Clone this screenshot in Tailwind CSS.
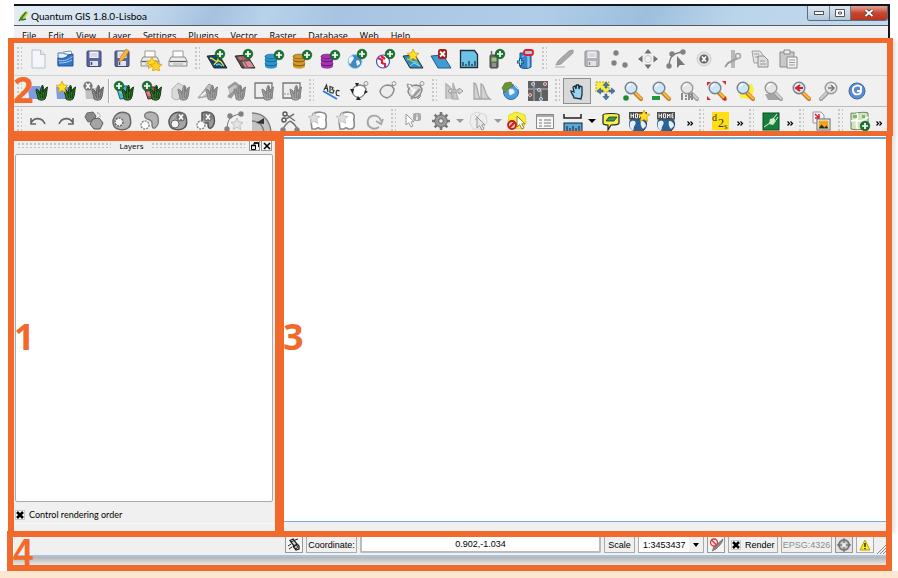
<!DOCTYPE html>
<html lang="en">
<head>
<meta charset="utf-8">
<title>Quantum GIS 1.8.0-Lisboa</title>
<script src="https://cdn.jsdelivr.net/npm/@tailwindcss/browser@4"></script>
</head>
<body class="bg-white">
<div class="flex min-h-screen flex-col overflow-hidden font-['Open_Sans','Noto_Sans',sans-serif] text-black">
  <main class="flex flex-1 flex-col pt-1 pr-[5px] pl-2">

    <header class="mr-[3px] ml-[6px] flex flex-col border-t-2 border-r-2 border-[#14141c]">
      <div class="flex h-5 items-center border-b border-[#4f5b66] bg-[linear-gradient(115deg,#e3ecf5_0%,#d0e0ef_12%,#b5cee7_19%,#a5c1de_23%,#b7d2ea_29%,#a7c5e2_37%,#b0cde8_60%,#9dbfdd_72%,#bad4ea_82%,#c3daee_100%)] pl-[3px]">
        <svg class="h-3 w-3" viewBox="0 0 12 12" aria-hidden="true"><path d="M2 11 4 5l6-4 1 2-4 6-3 1z" fill="#b6cf2f"/><path d="M2 11 9 2M4 7l1 3 4-1" stroke="#35701f" stroke-width="1.400" fill="none"/></svg>
        <h1 class="ml-[2px] flex-1 font-[Lato,sans-serif] text-[10px] leading-4">Quantum GIS 1.8.0-Lisboa</h1>
        <div class="mb-[5px] flex h-[15px] overflow-hidden rounded-b-[3px] border border-t-0 border-[#5d6b7a]">
          <button type="button" aria-label="Minimize" class="flex w-[22px] items-center justify-center border-r border-[#6d7b8a] bg-linear-to-b from-[#dbe7f2] to-[#b3c8dc]"><svg class="h-[5px] w-[10px]" viewBox="0 0 10 5"><rect x=".5" y="1.500" width="9" height="3" fill="#fff" stroke="#555"/></svg></button>
          <button type="button" aria-label="Maximize" class="flex w-[21px] items-center justify-center border-r border-[#6d7b8a] bg-linear-to-b from-[#dbe7f2] to-[#b3c8dc]"><svg class="h-2 w-[10px]" viewBox="0 0 10 8"><path d="M.5.500h9v7h-9zM3.500 3h3v2h-3z" fill="#fff" stroke="#555"/></svg></button>
          <button type="button" aria-label="Close" class="flex w-9 items-center justify-center bg-linear-to-b from-[#e0a396] via-[#c8452f] to-[#b8351f]"><svg class="h-2 w-[10px]" viewBox="0 0 10 8"><path d="m1.500 1 7 6m0-6-7 6" stroke="#4c3434" stroke-width="3.400"/><path d="m1.500 1 7 6m0-6-7 6" stroke="#fff" stroke-width="2"/></svg></button>
        </div>
      </div>
      <nav class="flex h-3 gap-3 bg-[#f0f0f0] pl-2 text-[9px] leading-5">
        <a href="#">File</a><a href="#">Edit</a><a href="#">View</a><a href="#">Layer</a><a href="#">Settings</a><a href="#">Plugins</a><a href="#">Vector</a><a href="#">Raster</a><a href="#">Database</a><a href="#">Web</a><a href="#">Help</a>
      </nav>
    </header>

    <section aria-label="Toolbars" class="relative border-x-[6px] border-y-[5px] border-[#f26a2b] bg-[#f0f0f0] shadow-[3px_2px_4px_rgba(0,0,0,0.12)]">
      <div id="row1" class="flex h-[33px] items-center border-b border-[#d2d2d2]"></div>
      <div id="row2" class="flex h-[31px] items-center border-b border-[#bdbdbd]"></div>
      <div id="row3" class="flex h-6 items-start overflow-hidden"></div>
      <span class="absolute top-[27px] -left-px text-4xl leading-10 font-bold text-[#f26a2b]">2</span>
    </section>

    <div class="relative mr-px flex flex-1 shadow-[3px_2px_4px_rgba(0,0,0,0.12)]">
      <aside aria-label="Layers" class="relative flex w-[276px] flex-col border-t-[5px] border-r-[9px] border-l-[6px] border-[#f26a2b] bg-[#f0f0f0]">
        <div class="flex h-[13px] items-start gap-1 pr-[3px] pl-1">
          <span class="mt-[2px] h-[5px] flex-1 bg-[radial-gradient(circle_at_1px_1px,#c4c4c4_1px,transparent_1px)] bg-[size:4px_4px]"></span>
          <h2 class="px-1 text-[8px] leading-[9px]">Layers</h2>
          <span class="mt-[2px] h-[5px] flex-1 bg-[radial-gradient(circle_at_1px_1px,#c4c4c4_1px,transparent_1px)] bg-[size:4px_4px]"></span>
          <div class="flex gap-px">
            <button type="button" aria-label="Float panel" class="flex h-[10px] w-[11px] items-center justify-center border border-t-0 border-[#999] bg-[#f6f6f6]"><svg class="h-2 w-2" viewBox="0 0 8 8"><path d="M3 1h4.500v4M3 1v2M.500 3.500h4v4h-4z" fill="none" stroke="#000"/><path d="M3 1h5M0 3.500h5" stroke="#000" stroke-width="1.500"/></svg></button>
            <button type="button" aria-label="Close panel" class="flex h-[10px] w-[11px] items-center justify-center border border-t-0 border-[#999] bg-[#f6f6f6]"><svg class="h-2 w-2" viewBox="0 0 8 8"><path d="m1 1 6 6m0-6L1 7" stroke="#000" stroke-width="1.600"/></svg></button>
          </div>
        </div>
        <div class="mr-[2px] ml-px flex-1 rounded-[2px] border border-[#aaa] bg-white"></div>
        <label class="flex h-5 items-center gap-1 pt-[5px] pl-px font-[Lato,sans-serif] text-[9px] leading-4">
          <span class="relative flex h-[10px] w-[10px]"><input type="checkbox" checked class="h-[10px] w-[10px] appearance-none border border-[#ccc] bg-white"><svg class="pointer-events-none absolute inset-0" viewBox="0 0 10 10"><path d="m2 2 6 6m0-6L2 8" stroke="#000" stroke-width="2.600"/></svg></span>
          Control rendering order
        </label>
        <div class="mt-px h-2 border-t border-[#fafafa]"></div>
        <span class="absolute top-[176px] left-0 text-4xl leading-10 font-bold text-[#f26a2b]">1</span>
      </aside>
      <section aria-label="Map canvas" class="relative flex flex-1 flex-col border-r-[6px] border-[#f26a2b] bg-white pt-px">
        <div class="flex-1 border-t-2 border-b border-t-[#6ea5d8] border-b-[#7aaad8]"></div>
        <div class="h-[9px] bg-[#f0f0f0]"></div>
        <span class="absolute top-[181px] -left-px text-4xl leading-10 font-bold text-[#f26a2b]">3</span>
      </section>
    </div>

    <footer class="relative mr-px -ml-px border-[6px] border-[#f26a2b] bg-white font-['Liberation_Sans',Arial,sans-serif] text-[9px] leading-4">
      <div class="ml-px flex h-5 items-start justify-end gap-[3px] border-b-2 border-[#a9c3dc] bg-[#f0f0f0] pl-[271px]">
        <button type="button" aria-label="Toggle extents and mouse position" class="flex h-4 w-[18px] items-center justify-center border border-t-0 border-[#999] bg-[#f4f4f4]"><svg class="h-[14px] w-[14px]" viewBox="0 0 14 14"><path d="M3 2.500 6 1l4 5-3 2zM6 8l3 4 3-1V8l-2-2" fill="#ddd" stroke="#222" stroke-width="1.300"/><path d="m1 8 3-2m-2 5 3-2m3-7 3-1M4 4l4-2" stroke="#222"/><circle cx="9" cy="9" r="1.500" fill="#fff" stroke="#222"/></svg></button>
        <label for="coord" class="h-4 w-[51px] border border-t-0 border-[#aaa] text-center">Coordinate:</label>
        <input id="coord" value="0.902,-1.034" class="h-4 min-w-0 flex-1 rounded-b-[2px] border-x-2 border-b-2 border-[#bbb] bg-white text-center outline-none">
        <label for="scale" class="h-4 w-[31px] border border-t-0 border-[#aaa] text-center">Scale</label>
        <span class="relative flex h-4 w-[66px] border border-t-0 border-[#aaa] bg-white"><select id="scale" class="w-full appearance-none bg-transparent pl-1"><option>1:3453437</option></select><svg class="pointer-events-none absolute top-0 right-0 h-[15px] w-[14px] bg-[#f0f0f0]" viewBox="0 0 14 15"><path d="M4 6h6l-3 4z"/></svg></span>
        <button type="button" aria-label="Stop map rendering" class="flex h-4 w-[18px] items-center justify-center border border-t-0 border-[#999] bg-[#f4f4f4]"><svg class="h-[14px] w-4" viewBox="0 0 16 14"><path d="M15 1c-1 5-4 7-7 10l-4 2c2-2 0-3 3-5z" fill="#888" stroke="#555" stroke-width=".6"/><circle cx="6" cy="4.500" r="3.500" fill="#fbe3e3" stroke="#d33b3b" stroke-width="1.300"/><path d="m3.500 2 5 5" stroke="#d33b3b" stroke-width="1.300"/></svg></button>
        <label class="flex h-4 w-[50px] items-center gap-1 border border-t-0 border-[#aaa] pl-[2px]"><span class="relative flex h-[10px] w-[10px]"><input type="checkbox" checked class="h-[10px] w-[10px] appearance-none border border-[#ccc] bg-white"><svg class="pointer-events-none absolute inset-0" viewBox="0 0 10 10"><path d="m2 2 6 6m0-6L2 8" stroke="#000" stroke-width="2.600"/></svg></span>Render</label>
        <span class="h-4 w-[51px] border border-t-0 border-[#aaa] text-center text-[#8c8c8c]">EPSG:4326</span>
        <button type="button" aria-label="Projection status" class="flex h-4 w-[18px] items-center justify-center border border-t-0 border-[#999] bg-[#e4e4e4]"><svg class="h-[14px] w-[14px]" viewBox="0 0 14 14"><circle cx="7" cy="7" r="5" fill="#ccc" stroke="#777" stroke-width="2"/><path d="M7 0v14M0 7h14" stroke="#777" stroke-width="1.300"/><circle cx="7" cy="7" r="2" fill="#eee"/></svg></button>
        <button type="button" aria-label="Messages" class="flex h-4 w-[18px] items-center justify-center border border-t-0 border-[#aaa] bg-[#f4f4f4]"><svg class="h-3 w-3" viewBox="0 0 12 12"><path d="m6 1 5 10H1z" fill="#ffeb1a" stroke="#b5a400"/><path d="M6 4v4m0 1v1.300" stroke="#111" stroke-width="1.300"/></svg></button>
        <svg class="mt-2 h-[9px] w-[9px]" viewBox="0 0 9 9"><path d="m0 9 9-9M3 9l6-6M6 9l3-3" stroke="#888"/></svg>
      </div>
      <div class="h-2 bg-linear-to-b from-[#b3b3b3] to-[#e9e9e9]"></div>
      <span class="absolute -top-1 left-0 text-4xl leading-10 font-bold text-[#f26a2b]">4</span>
    </footer>
  </main>
  <div class="h-[7px] bg-[#fde7d0]"></div>
</div>

<script>
const plus = (x, y) => `<circle cx="${x}" cy="${y}" r="4.800" fill="#1c7431" stroke="#0e5220" stroke-width=".6"/><path d="M${x - 3} ${y}h6M${x} ${y - 3}v6" stroke="#fff" stroke-width="1.700"/>`;
const cross = (x, y, c) => `<circle cx="${x}" cy="${y}" r="4.600" fill="${c}"/><path d="m${x - 2} ${y - 2.5} 4 5m0-5-4 5" stroke="#fff" stroke-width="1.600"/>`;
const star = (x, y, f = '#ffe21f', s = '#d99a12') => `<path transform="translate(${x} ${y})" d="m0-6 1.700 3.900 4.300.5-3.200 2.800.9 4.300L0 3.300-3.700 5.500l.9-4.300L-6-1.600l4.300-.5z" fill="${f}" stroke="${s}" stroke-width=".8"/>`;
const grass = (f = '#2f7a2c', s = '#16350f') => `<path d="M12 20c0-4-2-6-2-10 3 1 4 3 4.500 5 0-4 0-7 2-9 1.500 2 1 5 1 7 1-3 2-4 4-5-1 4-.5 8-2.500 12-2 1.500-5 1.500-7 0z" fill="${f}" stroke="${s}" stroke-width="1"/><path d="M11.500 12c2 2 2.500 4 3 7m2-11c0 4-.5 7 0 11m4-9c-2 3-2 6-2.500 9" stroke="${s}" fill="none" stroke-width="1"/>`;
const gg = grass('#a3a3a3', '#7d7d7d');
const layer = (f) => `<path d="m2 9 12-1 8 13H9z" fill="${f}" stroke="#222" stroke-width=".9"/>`;
const db = (a, b) => `<path d="M4 9v10c0 3.500 12 3.500 12 0V9z" fill="${a}"/><path d="M4 12.500c0 3 12 3 12 0M4 16.500c0 3 12 3 12 0" stroke="${b}" fill="none"/><ellipse cx="10" cy="9.500" rx="6" ry="2.300" fill="${a}" stroke="${b}" stroke-width=".7"/>` + plus(18, 8);
const floppy = (a, b) => `<rect x="5" y="4" width="14" height="15.500" rx="1" fill="${a}" stroke="${b}"/><path d="M7.500 4.500h9V11h-9z" fill="#f2f4fa"/><path d="M8.500 7h7m-7 2h7" stroke="#b8bccb"/><path d="M8 14h8v5H8z" fill="#dfe3ee"/><path d="M9.500 15v3" stroke="${b}" stroke-width="1.500"/>`;
const printer = `<path d="M7 11V4h10v7" fill="#fff" stroke="#999"/><path d="M5 10h14l2 4v5H3v-5z" fill="#ececec" stroke="#8a8a8a"/><path d="M3.500 14.500h17" stroke="#555" stroke-width="1.200"/><path d="M7 17h10" stroke="#aaa"/>`;
const mag = (g, h) => `<path d="m14 14 6 6" stroke="${h[1]}" stroke-width="4" stroke-linecap="round"/><path d="m14.500 14 5.500 5.500" stroke="${h[0]}" stroke-width="2.400" stroke-linecap="round"/><circle cx="10" cy="9" r="5.800" fill="${g[0]}" stroke="${g[1]}" stroke-width="1.400"/><path d="M6.500 8c.5-2 2-2.800 3.500-2.800" stroke="#fff" stroke-width="1.400" fill="none"/>`;
const magC = mag(['#cfe6f6', '#76828c'], ['#f5b83c', '#c4761c']);
const magG = mag(['#e6e6e6', '#999'], ['#ccc', '#999']);
const blob = 'M7 5c4-3 12-2 13 3 1 4 1 9-2 11-4 3-12 2-14-2C2 13 3 8 7 5z';
const dots = (a) => a.map(p => `<circle cx="${p[0]}" cy="${p[1]}" r="2.700" fill="#828282"/>`).join('');
const tag = (f) => `<path d="M5 12c1-3 4-6 8-6l4 1 2 3c0 4-3 8-7 9-4-1-7-4-7-7z" fill="${f}" stroke="#8a8a8a" stroke-width="1.500"/><path d="m17 7 2-3" stroke="#8a8a8a" stroke-width="1.600"/><circle cx="19" cy="4.500" r="2" fill="#eee" stroke="#999"/>`;
const globe = `<circle cx="11" cy="15" r="8.500" fill="#2a6296" stroke="#173a60"/><path d="M3 13c4-3 7 0 5 3s-1 5-2 6c-3-2-4-6-3-9zm11-1c3 0 5 2 5 5l-3 3c-2-2-3-5-2-8z" fill="#e4eef5"/>`;
const home = `<rect x="2" y="3" width="18" height="7.500" fill="#4a4a4a"/><path d="M4 4.500v4.500m2.500-4.500v4.500M4 6.700h2.500M8.500 4.800h2v4h-2zM12.500 9V5l1.200 2L15 5v4m3.500-4.200H17v4h1.800M17 6.900h1.500" stroke="#fff" stroke-width=".9" fill="none"/>`;
const arrows = (c) => `<path d="m12 2 3.500 4.500h-7zm0 20 3.500-4.500h-7zM2 12l4.500-3.500v7zm20 0-4.500-3.500v7z" fill="${c}"/>`;
const cursor = (x, y, f, s) => `<path transform="translate(${x} ${y})" d="M0 0v11l2.600-2.300L5 13l2-1-2.200-4.200H8z" fill="${f}" stroke="${s}"/>`;

const icons = {
  new: `<path d="M6 3h8.500L19 7.500V21H6z" fill="#f4f6fb" stroke="#b9c0cf"/><path d="M14.500 3v4.500H19" fill="#dde3ef" stroke="#b9c0cf"/>`,
  open: `<path d="M4 8V6h5l2 1h7v11H4z" fill="#e9f1fb" stroke="#4d78b0"/><path d="m9 5 8-1 1 4" fill="#fff" stroke="#7896c0"/><path d="M4 11c5 1 8 0 10-3l5-1v12H4z" fill="#3575c8" stroke="#23559c"/><path d="M4.500 13.500c6 1 10-1 14-4M5 16c5 0 10-1 13-3" stroke="#a9cdf5" fill="none"/>`,
  save: floppy('#59659c', '#3c4674'),
  saveas: floppy('#59659c', '#3c4674') + `<path d="m9 15 1-4 6-9 3 2-6 9z" fill="#f7b733" stroke="#c97e14" stroke-width=".7"/>`,
  printstar: printer + star(14, 16) + star(18, 19, '#ffd21f'),
  print: printer,
  vector: layer('#17456b') + `<path d="M5 11c4 0 4 4 8 3s4 4 6 5M9 18c1-3 5-2 4-8" stroke="#e3e83a" stroke-width="1.300" fill="none"/><path d="m11 18 3-1 3 2" stroke="#52c5ee" stroke-width="1.500" fill="none"/>` + plus(15, 7),
  raster: layer('#5b4c4c') + `<path d="m4 10 10-1 2 3-9 1z" fill="#c96a70"/><path d="m9 15 8-1 4 6-9 .5z" fill="#db8f92"/><path d="m8 9 7 12" stroke="#8f5a76" stroke-width="1.300"/>` + plus(15, 7),
  pg: db('#2e95cd', '#17628f'), sl: db('#d39a2b', '#7b5410'), ms: db('#a437b0', '#64136f'),
  wms: `<circle cx="10" cy="14.500" r="7" fill="#3d8ac4" stroke="#a8cbe4"/><path d="M5 10c3-2 5 1 3 3s-2 4-3 4c-2-2-2-5 0-7zm6 4c3-2 4 1 4 3l-3 2z" fill="#eef6fb"/>` + plus(17, 7),
  wfs: `<circle cx="10" cy="14.500" r="6.500" fill="#fff" stroke="#3a53c8" stroke-width="1.200"/><path d="m5 11 4 2 0 3 3 1 0 3M8 9l4 3" stroke="#e0203a" stroke-width="2.200" fill="none"/>` + plus(17, 7),
  newshp: layer('#2f8fc4') + `<path d="M6 12c4 0 4 3 8 3s2 3 4 4" stroke="#d6f04a" fill="none"/><path d="m9 19 4-3 6 3" stroke="#8fe0f5" fill="none"/>` + star(12, 8),
  remove: `<path d="m2 9 12-1 8 13H9z" fill="#3f9bd0" stroke="#1f5f8f"/><rect x="9" y="2" width="9" height="10" rx="2.500" fill="#a81b1b"/><path d="m11 4.500 5 5m0-5-5 5" stroke="#fff" stroke-width="1.800"/>`,
  measurebook: `<path d="M3.500 3.500h14l3 4v13h-17z" fill="#6cc3e6" stroke="#1d2e3a" stroke-width="1.300"/><path d="M6 19v-4m3 4v-2m3 2v-5m3 5v-2m3 2v-5" stroke="#12384c" stroke-width="1.300"/>`,
  gps: `<rect x="5" y="8" width="8" height="13" rx="1" fill="#5b6b5b" stroke="#444"/><rect x="6.500" y="10.500" width="5" height="4" fill="#9ec27a"/><path d="M7 17h4m-4 2h4" stroke="#bbb"/><path d="M6.500 9V4" stroke="#666" stroke-width="1.500"/>` + plus(15, 7),
  oracle: `<path d="M7 6h11v14c-3 2-8 2-11 0z" fill="#3385d0" stroke="#1b4e89"/><path d="M9 10c2-2 5-2 6 0v11M16 9v11" stroke="#a6d2f5" fill="none"/><rect x="11" y="3" width="9" height="5" rx="2" fill="#a9c6ea" stroke="#e51c23" stroke-width="1.800"/><path d="M4 15h7m-3.500-4v8" stroke="#1b5a7a" stroke-width="3"/><path d="M5 15h5m-2.500-3v6" stroke="#9adcf2"/>`,
  edit: `<path d="m4 18 2-4L17 4l4-1v3L9 17z" fill="#a9a9a9" stroke="#9a9a9a"/><path d="M3 20h10" stroke="#c4c4c4" stroke-width="1.500"/>`,
  saveg: floppy('#b3b3b3', '#909090'),
  points: dots([[8, 6], [6, 16], [17, 18]]),
  move: arrows('#6e6e6e') + `<circle cx="12" cy="12" r="3.500" fill="none" stroke="#ccc"/>`,
  node: `<path d="M5 18C6 10 8 6 19 5" stroke="#777" fill="none" stroke-width="1.300"/>` + dots([[5, 19], [8, 7], [19, 5]]) + `<path d="M13 9v12l3-3h5z" fill="#777"/>`,
  del: `<circle cx="12" cy="12" r="7" fill="#e4e4e4" stroke="#ccc"/>` + cross(12, 12, '#666'),
  cut: `<path d="M12 3v18M14 3v18" stroke="#a6a6a6" stroke-width="1.500"/><path d="m5 20 3-4 10-5" stroke="#9b9b9b" stroke-width="2" fill="none"/><circle cx="18" cy="9" r="2.500" fill="#eee" stroke="#a6a6a6" stroke-width="1.500"/>`,
  copy: `<path d="M4 4h8l3 4v8H6z" fill="#e5e5e5" stroke="#a0a0a0"/><path d="M10 9h6l4 4v7H10z" fill="#ddd" stroke="#8c8c8c"/><path d="M6 7h5M7 10h4m1 4h5m-5 3h6" stroke="#999"/>`,
  paste: `<path d="M4 5h14v15H4z" fill="#c9c9c9" stroke="#8a8a8a"/><path d="M8 3h6v4H8z" fill="#eee" stroke="#8a8a8a"/><path d="M11 10h10v11H11z" fill="#f4f4f4" stroke="#8a8a8a"/><path d="M13 13h6m-6 2.500h6M13 18h6" stroke="#999"/>`,
  g1: `<path d="M2 7h12l3 13H3z" fill="#7c9fdb"/>` + grass(),
  g2: `<path d="M2 8h13l2 12H3z" fill="#7c9fdb"/>` + grass() + star(8, 8),
  g3: `<path d="M3 9h12l2 11H4z" fill="#c0c0c0"/>` + grass('#8d8d8d', '#5e5e5e') + cross(6, 7, '#777'),
  g4: `<path d="M4 7h11l3 12-10 1z" fill="#43b4d8" stroke="#245d7a"/><path d="m7 12 6 5" stroke="#e8e34a"/>` + grass() + plus(7, 7),
  g5: `<path d="M4 8h11l3 11-10 1z" fill="#a0555d" stroke="#4d2a2a"/><path d="m6 13 7-1 1 4-6 1z" fill="#d9808a"/>` + grass() + plus(7, 7),
  g6: `<path d="M4 10 10 4l8 4v10l-10 3-4-2z" fill="#dadada" stroke="#b5b5b5"/>` + gg,
  g7: `<path d="M2 19 13 5l4 2-3 10z" fill="#bdbdbd" stroke="#9c9c9c"/><path d="m5 17 7-5" stroke="#f4f4f4" stroke-width="2"/>` + gg,
  g8: `<path d="m4 9 7-5 4 3-9 12m-2-1L15 9" fill="#c5c5c5" stroke="#999" stroke-width="2.500"/>` + gg,
  g9: `<path d="M3 4h17v15H3z" fill="#ededed" stroke="#777" stroke-width="1.300"/>` + gg,
  g10: `<path d="M3 4h17v15H3z" fill="#ededed" stroke="#777" stroke-width="1.300"/><path d="M4 15h9" stroke="#888" stroke-dasharray="2 1"/>` + gg,
  abc: `<path d="m4 12 14 8" stroke="#2f7fd8" stroke-width="2"/><path d="m5 11 2.500-5 1.500 7M6 9.500h3m2 4V7.500l3 1-1 2 2 1-1 2.500zm9.500-1.500c-3-2-4 1-3 4l3 1" fill="none" stroke="#333" stroke-width="1.200"/>`,
  t1: tag('#fff') + `<path d="M8 4h4l-2 4zM3 10h4l-1 5zm6 11 2-4 3 4zm8-6 1-4 3 2z" fill="#222"/>`,
  t2: tag('#ececec'),
  t3: `<path d="m4 5 5 1 9 11-3 3L5 9z" fill="#bbb" stroke="#999"/>` + tag('#ddd') + `<path d="m8 20 9-10" stroke="#999" stroke-width="2.500"/><path d="m6 6 4 5m2-1-3 5" stroke="#fff" stroke-width="1.500"/>`,
  h1: `<path d="M4 20V5l4 3 2 12m1 0V4l5 16z" fill="#ccc" stroke="#b3b3b3" stroke-width="1.500"/><path d="m6 12 3-3v2h8V9l4 3-4 3v-2H9v2z" fill="#ddd" stroke="#999"/>`,
  h2: `<path d="M4 20V4c4 0 3 11 6 16zm7 0V5c4 0 3 11 9 15z" fill="#d2d2d2" stroke="#a8a8a8" stroke-width="1.300"/>`,
  globe2: `<circle cx="13" cy="13" r="7.500" fill="#4c9edb" stroke="#2a6ea8"/><path d="m4 9 3-5 6-1 2 4-4 2-4 5z" fill="#5e9638" stroke="#8a6a2a" stroke-width=".8"/><path d="M11 11c3-2 6 0 5 3l-4 2zm5-5 4 4" fill="#f0f8ff" stroke="#d8edfa"/>`,
  rasterx: `<rect x="2" y="2" width="20" height="20" fill="#606060"/><path d="M8 2v20M2 10h20M15 10v12" stroke="#8b8b8b" stroke-width="2"/><g fill="#fff"><circle cx="7" cy="5" r="1.800"/><circle cx="19" cy="5" r="1.800"/><circle cx="4" cy="16" r="1.800"/><circle cx="13" cy="11" r="1.800"/><circle cx="15" cy="20" r="1.800"/></g><g fill="#d62828"><circle cx="19" cy="5" r="1"/><circle cx="4" cy="16" r="1"/></g><g fill="#2b6fc4"><circle cx="7" cy="5" r="1"/><circle cx="13" cy="11" r="1"/><circle cx="15" cy="20" r="1"/></g>`,
  pan: `<path d="M9 19c0-3-3-4-3-7l3 1-1-5 2-1 1 3 .5-4h2l.5 4 1-3 2 1v7c0 3-1 3-1 5z" fill="#9fd4f0" stroke="#16303f" stroke-width="1.300"/>`,
  pansel: `<path d="M3 3h13v10H3z" fill="#f8ec4a" stroke="#b8a818" stroke-dasharray="2 1"/><path d="m13 3 3 3.500h-2V9h-2V6.500h-2zm0 18 3-3.500h-2V15h-2v2.500h-2zM4 12l3.500-3v2H10v2H7.500v2zm18 0-3.500-3v2H16v2h2.500v2z" fill="#4d7ba3" stroke="#2f5878" stroke-width=".6"/>`,
  zin: magC + `<circle cx="5" cy="19" r="2.800" fill="#1d8a35"/>`,
  zout: magC + `<path d="M3 17h8v4H3z" fill="#1d9a3f"/>`,
  zone: magG + `<path d="M5 14v7m4-5v2m0 1v2m3-7v7m0-3h3m0-4v7" stroke="#8b8b8b" stroke-width="2"/>`,
  zfull: magC + `<path d="m2 3 4 0-4 4zm19-1v4l-4-4zM2 21v-4l4 4zm19 0h-4l4-4z" fill="#e0242c"/>`,
  zsel: `<path d="M6 5h13l2 6-3 9-11-1z" fill="#fbee3c"/>` + magC,
  zlayer: `<path d="M4 15h13l5 6H7z" fill="#a5a5a5"/>` + magG,
  zlast: magC + `<path d="M14 9H9m2-3L7 9l4 3" stroke="#d8161f" stroke-width="2" fill="none"/>`,
  znext: `<g transform="translate(24 0) scale(-1 1)">` + magG + `</g><path d="M11 9h5m-2-3 3 3-3 3" stroke="#777" stroke-width="1.500" fill="none"/>`,
  refresh: `<circle cx="12" cy="12" r="8" fill="#5d8bd3" stroke="#3d68b0"/><path d="M16 8c-3-3-9-1-8 4 1 5 8 4 8 0h-4m4-5v4" stroke="#fff" stroke-width="1.900" fill="none"/>`,
  undo: `<path d="M5 14c3-6 11-6 14 1M5 9v6h5" fill="none" stroke="#666" stroke-width="1.600"/>`,
  redo: `<path d="M19 14c-3-6-11-6-14 1M19 9v6h-5" fill="none" stroke="#666" stroke-width="1.600"/>`,
  simp: `<path d="m5 4 6-1 3 4-2 5-6 1-3-5z" fill="#8a8a8a" stroke="#666"/><path d="m11 10 6-1 4 5-3 6h-6l-4-5z" fill="#a5a5a5" stroke="#555"/><path d="M15 4c3 0 3 1 3 4" stroke="#888" fill="none" stroke-dasharray="1.500 1"/>`,
  ring: `<path d="${blob}" fill="#b3b3b3" stroke="#666" stroke-width="1.500"/><circle cx="9" cy="13" r="4" fill="#f4f4f4" stroke="#666" stroke-width="1.500" stroke-dasharray="2 1"/>`,
  part: `<path d="M8 4c4-2 11-1 12 4 1 5 0 9-3 11-3 1-3-2-3-5s-2-3-5-4-3-5-1-6z" fill="#b3b3b3" stroke="#777" stroke-width="1.300"/><circle cx="7" cy="16" r="4" fill="#fff" stroke="#888" stroke-width="1.500" stroke-dasharray="2 1"/>`,
  delring: `<path d="${blob}" fill="#a5a5a5" stroke="#555" stroke-width="1.500"/><circle cx="9" cy="15" r="4" fill="#f4f4f4" stroke="#666"/>` + cross(15, 8, '#757575'),
  delpart: `<path d="M8 4c4-2 11-1 12 4 1 5 0 9-3 11-3 1-3-2-3-5H8z" fill="#999" stroke="#555" stroke-width="1.500"/><circle cx="7" cy="16" r="4" fill="#fff" stroke="#888" stroke-width="1.500" stroke-dasharray="2 1"/>` + cross(14, 8, '#757575'),
  reshape: `<path d="M5 19C6 10 8 7 18 5" stroke="#777" fill="none"/>` + dots([[5, 20], [8, 7], [19, 5]]) + star(15, 15, '#e4e4e4', '#b5b5b5'),
  offset: `<path d="M2 4c11 0 18 7 19 19H2z" fill="#c4c4c4"/><path d="M2 4c11 0 18 7 19 19M2 12c8 0 11 5 12 11" stroke="#777" fill="none" stroke-width="1.300"/><path d="m6 14 8-5v6z" fill="#333"/>`,
  split: `<circle cx="7" cy="5" r="2" fill="none" stroke="#555" stroke-width="1.400"/><circle cx="6" cy="11" r="2" fill="none" stroke="#555" stroke-width="1.400"/><path d="m9 6 8 6m-9-2 8-5M12 12c-3 2-6 5-7 9m7-9c4 2 6 5 8 9" stroke="#777" stroke-width="1.500" fill="none"/>` + dots([[5, 21], [19, 21]]),
  merge1: `<path d="M7 5c4-3 12-2 13 1 1 2-1 4 0 6 1 5 0 8-3 8h-3c-1-2-3-1-4 0H6l-1-8z" fill="#fff" stroke="#8a8a8a" stroke-width="1.600"/>` + star(8, 9, '#ddd', '#bbb'),
  rot: `<path d="M17 18c-5 4-13 0-11-7 2-6 11-6 13 1m2-2-2 5-5-3" fill="none" stroke="#a5a5a5" stroke-width="1.900"/>`,
  ident: cursor(5, 5, '#fff', '#999') + `<rect x="12" y="4" width="8" height="8" rx="2" fill="#aaa"/><path d="M16 5.500v1m0 1V11" stroke="#fff" stroke-width="1.400"/>`,
  gear: `<path d="M12 3v18M3 12h18M5.600 5.600l12.800 12.800m0-12.800L5.600 18.400" stroke="#777" stroke-width="2.600"/><circle cx="12" cy="12" r="6.200" fill="#9a9a9a" stroke="#6a6a6a"/><circle cx="12" cy="12" r="2.300" fill="#eee" stroke="#666"/>`,
  sel: `<path d="m4 6 6-3 9 3 1 7-4 7H6l-3-6z" fill="#eee" stroke="#d6d6d6"/><path d="m8 6 5 5m0-6-5 6" stroke="#bbb"/>` + cursor(10, 8, '#e8e8e8', '#999'),
  desel: `<path d="m4 6 7-3 9 3 1 8-4 6-11-1-3-6z" fill="#f8f03e" stroke="#e2d822"/>` + cursor(12, 7, '#fff', '#a07e2a') + `<circle cx="7" cy="16" r="4" fill="#f4b6a8" stroke="#c41e1e" stroke-width="1.800"/><path d="m4.500 18.500 5-5" stroke="#c41e1e" stroke-width="1.800"/>`,
  table: `<path d="M3.500 5.500h17v14h-17z" fill="#f7f7f7" stroke="#888"/><path d="M4 6h16v2H4z" fill="#aaa"/><path d="M6 11h3m2 0h7M6 14h3m2 0h7M6 17h3m2 0h7" stroke="#777"/>`,
  measure: `<path d="M3 5v4h17V5" fill="none" stroke="#222" stroke-width="1.500"/><rect x="3" y="14" width="18" height="9" fill="#5ba7d6" stroke="#123"/><path d="M6 22v-5m3 5v-3m3 3v-5m3 5v-3m3 3v-5" stroke="#123"/>`,
  tip: `<path d="M4 6c0-2 16-2 16 0v8c0 2-6 2-8 2l-3 5v-5c-3 0-5 0-5-2z" fill="#f5f04a" stroke="#222" stroke-width="1.200"/><path d="m7 12 3-4h8l-3 4z" fill="#3d9a4c" stroke="#123" stroke-width=".7"/>`,
  bm1: globe + home + star(17, 7),
  bm2: globe + home,
  d2s: `<rect x="3" y="3" width="17" height="18" fill="#ffdf12"/><text x="3" y="12" font-family="Liberation Serif" font-size="10" fill="#333">d</text><text x="9" y="18" font-family="Liberation Serif" font-size="12" fill="#333">2</text><text x="15" y="20" font-family="Liberation Serif" font-size="9" fill="#333">s</text>`,
  grassp: `<rect x="4" y="4" width="16" height="17" fill="#15803a" stroke="#0b4a20"/><path d="m10 15 1-5 4-1 2 3-3 4z" fill="#d3e5d3"/><path d="m14 10 4-5m-1 6 2-3M5 18l6-4" stroke="#e8f2e8"/>`,
  img: `<path d="M4 3h8l3 3v8H4z" fill="#f4f4fb" stroke="#99a"/><path d="m6 5 4 4m0-4v4H6" stroke="#e21c2a" stroke-width="1.500" fill="none"/><rect x="8" y="10" width="13" height="11" fill="#fff" stroke="#567"/><path d="M9.500 11.500h10v8h-10z" fill="#f0a422"/><path d="m9.500 19.500 3-4 3 3 2-2 2 3z" fill="#2c2a1a"/>`,
  osm: `<path d="M3 4c4 1 12-2 17 0v17c-5-2-12 1-17-1z" fill="#cfe6bd" stroke="#6f7f5f"/><path d="M3 12c6-3 9 4 17-4M9 4c2 6-3 10 1 16" stroke="#fff" stroke-width="1.800" fill="none"/><path d="M5 6h4v3H5zm9 0h3v3h-3z" fill="#7bb86d"/>` + plus(17, 17)
};

const dotsCol = '<span class="h-6 w-[5px] bg-[radial-gradient(circle_at_1px_1px,#c8c8c8_1px,transparent_1px)] bg-[size:4px_4px]"></span>';
const draw = {
  '^': `<span class="flex h-7 w-[10px] shrink-0 items-center justify-center">${dotsCol}</span>`,
  '|': `<span class="flex h-7 w-[11px] shrink-0 items-center justify-center">${dotsCol}</span>`,
  '!': '<span class="h-6 w-[2px] shrink-0 border-l border-[#aaa] bg-white"></span>',
  'v': '<button type="button" aria-label="More tools" class="flex h-7 w-[10px] shrink-0 items-center justify-center"><svg class="h-1 w-2" viewBox="0 0 8 4"><path d="M0 0h8L4 4z" fill="#999"/></svg></button>',
  'V': '<button type="button" aria-label="Measure options" class="flex h-7 w-[10px] shrink-0 items-center justify-center"><svg class="h-1 w-2" viewBox="0 0 8 4"><path d="M0 0h8L4 4z" fill="#000"/></svg></button>',
  '>': '<button type="button" aria-label="Show hidden tools" class="flex h-7 w-[11px] shrink-0 items-center justify-center pt-1"><svg class="h-[5px] w-[7px]" viewBox="0 0 7 5"><path d="m.5.500 2 2-2 2m3-4 2 2-2 2" fill="none" stroke="#000" stroke-width="1.200"/></svg></button>',
  '_': '<span class="w-1 shrink-0"></span>'
};
const rows = {
  row1: '^ new open save saveas printstar print | vector raster pg sl ms wms wfs newshp remove measurebook gps oracle | edit saveg points move node del cut copy paste',
  row2: '^ g1 g2 g3 ! g4 g5 g6 g7 g8 g9 g10 | abc t1 t2 t3 | h1 h2 globe2 rasterx | pan pansel zin zout zone zfull zsel zlayer zlast znext refresh',
  row3: '^ undo redo simp ring part delring delpart reshape offset split merge1 merge1 rot | ident gear v sel v desel table measure V tip bm1 bm2 _ > | d2s > | grassp > | img | osm >'
};
for (const [id, list] of Object.entries(rows)) {
  document.getElementById(id).innerHTML = list.split(' ').map(n => draw[n] ||
    `<button type="button" aria-label="${n}" class="${n === 'pan'
      ? 'flex h-[26px] w-7 shrink-0 items-center justify-center border border-[#8f8f8f] bg-[#d9d9d9]'
      : 'flex h-7 w-7 shrink-0 items-center justify-center'}"><svg class="h-6 w-6 shrink-0" viewBox="0 0 24 24" fill="none">${icons[n]}</svg></button>`).join('');
}
</script>
</body>
</html>
